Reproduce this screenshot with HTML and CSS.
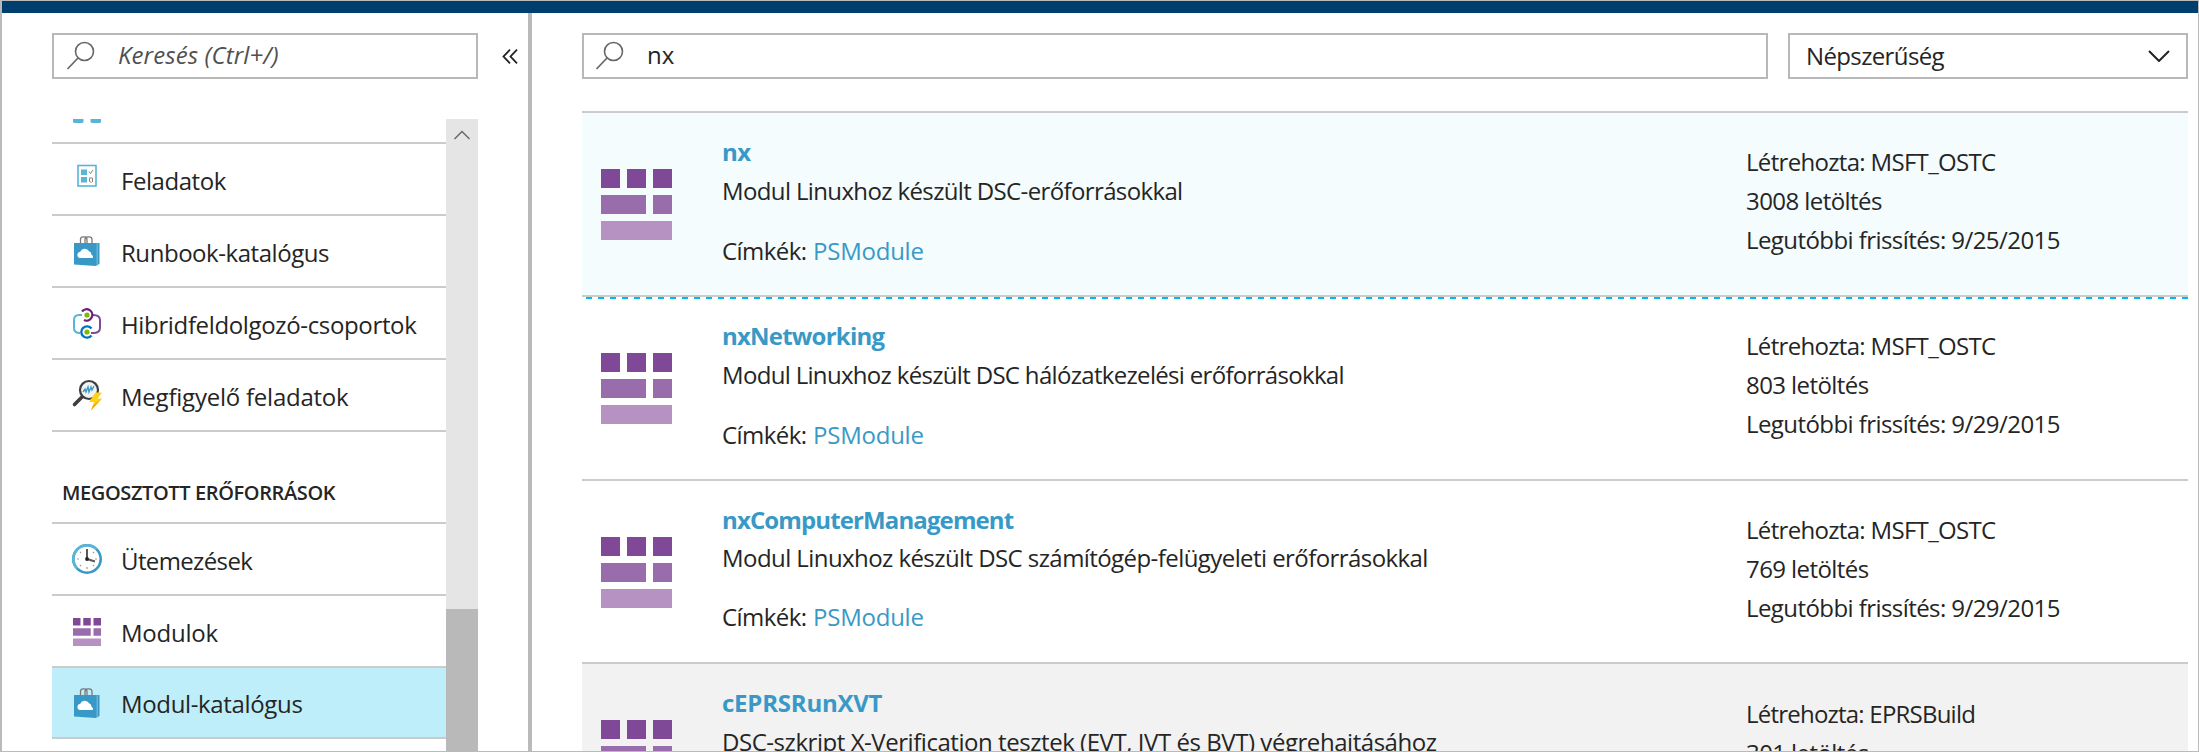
FILE: index.html
```
<!DOCTYPE html>
<html lang="hu">
<head>
<meta charset="utf-8">
<title>Modul-katalógus</title>
<link rel="stylesheet" href="styles.css">
</head>
<body>
<svg class="defs" aria-hidden="true">
  <symbol id="search" viewBox="0 0 30 30"><circle cx="18.5" cy="10.5" r="9" fill="none" stroke="#666" stroke-width="1.6"/><path d="M12 17L1.500 28" fill="none" stroke="#666" stroke-width="1.700"/></symbol>
  <symbol id="module" viewBox="0 0 71 71"><path fill="#804998" d="M0 0h19v19H0zM26 0h19v19H26zM52 0h19v19H52z"/><path fill="#996cac" d="M0 26h45v19H0zM52 26h19v19H52z"/><path fill="#b592c1" d="M0 52h71v19H0z"/></symbol>
  <symbol id="bag" viewBox="0 0 32 32"><path d="M9.500 9V4.500Q9.500 1.800 12 1.800H13Q16 1.800 16 4.500V9M14 9V4.500Q14 1.800 17 1.800H18Q21 1.800 21 4.500V9" fill="none" stroke="#7a7a7a" stroke-width="1.300"/><path fill="#3999c6" d="M3 8h25.500v21l-4 2L3 29.500z"/><path fill="#68b4d8" d="M25.500 8.500L27 8v22l-1.500.8z"/><path fill="#fff" d="M8.500 23a3.200 3.200 0 0 1 .8-6.200 4.800 4.800 0 0 1 8.700-.5 3.600 3.600 0 0 1 2.500 3.500q1.800.5 1.500 2.500l-.5.700z"/></symbol>
</svg>
<div class="window">
  <div class="topbar"></div>
  <div class="body">
    <aside class="sidebar">
      <div class="side-head">
        <div class="field side-search"><svg class="search-icon"><use href="#search"/></svg><span class="placeholder">Keresés (Ctrl+/)</span></div>
        <svg class="collapse" viewBox="0 0 16 15"><path d="M8 .7L1.500 7.500L8 14.300M15 .7L8.500 7.500L15 14.300" fill="none" stroke="#222" stroke-width="1.800"/></svg>
      </div>
      <div class="side-scroll">
        <nav class="menu">
          <div class="row partial"><svg class="dashes" viewBox="0 0 28 4"><path fill="#59b4d9" d="M0 0h10.500v3l-1 1H1L0 3zM17.500 0H28v3l-1 1h-8.500l-1-1z"/></svg></div>
          <div class="row"><svg class="icon" viewBox="0 0 32 32"><rect x="7" y="2.500" width="18" height="20.500" fill="#fff" stroke="#59b4d9" stroke-width="1.600"/><path fill="#59b4d9" d="M10 6.500h6V12h-6zM10 14h6v5.500h-6z"/><path d="M18 8.500l1.500 2L22 7M18 15h3.500v4M18.500 15.500v3l2 1" fill="none" stroke="#777" stroke-width=".9"/></svg><span class="fit-4">Feladatok</span></div>
          <div class="row"><svg class="icon"><use href="#bag"/></svg><span class="fit-4">Runbook-katalógus</span></div>
          <div class="row"><svg class="icon" viewBox="0 0 32 32" fill="none" stroke-width="2"><path stroke="#59b4d9" d="M11 8H8q-5 0-5 5v8q0 5 6 5"/><path stroke="#804998" d="M22 8q7 0 7 5v8q0 5-7 5h-2"/><path stroke="#68217a" stroke-width="2.300" d="M11 4.500a5.700 5.700 0 1 1 2 8.500"/><path stroke="#0072c6" stroke-width="2.300" d="M20.500 21.500a5.700 5.700 0 1 0 0 7"/><circle cx="16" cy="8" r="2.600" fill="#7fba00"/><circle cx="16" cy="25" r="2.600" fill="#7fba00"/></svg><span class="fit-3">Hibridfeldolgozó-csoportok</span></div>
          <div class="row"><svg class="icon" viewBox="0 0 32 32"><path d="M12 17L3.500 25.500" stroke="#3e3e3e" stroke-width="3.600" stroke-linecap="round"/><circle cx="18" cy="11" r="9" fill="#f2f2f2" stroke="#3e3e3e" stroke-width="2.200"/><path d="M12 13l2-3 1 3 2-5 1 5 2-5 1 3 2-4" fill="none" stroke="#3999c6" stroke-width="1.400"/><path fill="#fcd116" d="M24.500 13.500H31l-4.500 6H31L20 31.500l3-8.500h-5z"/><path fill="#f8a21a" d="M31 19.500L20 31.500l2-5z"/></svg><span class="fit-2">Megfigyelő feladatok</span></div>
          <h2 class="group">MEGOSZTOTT ERŐFORRÁSOK</h2>
          <div class="row"><svg class="icon" viewBox="0 0 32 32"><circle cx="16" cy="16" r="13.700" fill="#fff" stroke="#3999c6" stroke-width="2.600"/><path d="M6.300 25.700A13.700 13.700 0 0 1 25.700 6.300" fill="none" stroke="#59b4d9" stroke-width="2.600"/><path d="M16 6v2M16 24v2M6 16h2M24 16h2M9 9l1 1M23 9l-1 1M9 23l1-1M23 23l-1-1" stroke="#999" stroke-width="1.200"/><path d="M16 6v10l8 2.500" fill="none" stroke="#5a5a5a" stroke-width="2"/><circle cx="16" cy="16" r="1.900" fill="#222"/></svg><span class="fit-5">Ütemezések</span></div>
          <div class="row"><svg class="icon module-small"><use href="#module"/></svg><span class="fit-2">Modulok</span></div>
          <div class="row selected"><svg class="icon"><use href="#bag"/></svg><span class="fit-3">Modul-katalógus</span></div>
        </nav>
        <div class="scrollbar"><div class="track"><svg class="up" viewBox="0 0 16 10"><path d="M.5 9L8 1.500L15.500 9" fill="none" stroke="#666" stroke-width="1.400"/></svg></div><div class="thumb"></div></div>
      </div>
    </aside>
    <main class="main">
      <div class="toolbar">
        <div class="field main-search"><svg class="search-icon"><use href="#search"/></svg><span>nx</span></div>
        <div class="field select"><span class="fit-6">Népszerűség</span><svg class="down" viewBox="0 0 22 12"><path d="M1 1L11 11L21 1" fill="none" stroke="#222" stroke-width="2"/></svg></div>
      </div>
      <div class="list">
        <article class="item hover">
          <svg class="item-icon"><use href="#module"/></svg>
          <div class="info"><h3 class="fit-6">nx</h3><p class="fit-6">Modul Linuxhoz készült DSC-erőforrásokkal</p><p class="tags">Címkék: <a>PSModule</a></p></div>
          <div class="meta"><p class="fit-7">Létrehozta: MSFT_OSTC</p><p>3008 letöltés</p><p>Legutóbbi frissítés: 9/25/2015</p></div>
        </article>
        <article class="item">
          <svg class="item-icon"><use href="#module"/></svg>
          <div class="info"><h3 class="fit-8">nxNetworking</h3><p class="fit-7">Modul Linuxhoz készült DSC hálózatkezelési erőforrásokkal</p><p class="tags">Címkék: <a>PSModule</a></p></div>
          <div class="meta"><p class="fit-7">Létrehozta: MSFT_OSTC</p><p>803 letöltés</p><p>Legutóbbi frissítés: 9/29/2015</p></div>
        </article>
        <article class="item short">
          <svg class="item-icon"><use href="#module"/></svg>
          <div class="info"><h3 class="fit-9">nxComputerManagement</h3><p>Modul Linuxhoz készült DSC számítógép-felügyeleti erőforrásokkal</p><p class="tags">Címkék: <a>PSModule</a></p></div>
          <div class="meta"><p class="fit-7">Létrehozta: MSFT_OSTC</p><p>769 letöltés</p><p>Legutóbbi frissítés: 9/29/2015</p></div>
        </article>
        <article class="item muted">
          <svg class="item-icon"><use href="#module"/></svg>
          <div class="info"><h3 class="fit-2">cEPRSRunXVT</h3><p class="fit-4">DSC-szkript X-Verification tesztek (EVT, IVT és BVT) végrehajtásához</p></div>
          <div class="meta"><p class="fit-8">Létrehozta: EPRSBuild</p><p>301 letöltés</p></div>
        </article>
      </div>
    </main>
  </div>
</div>
</body>
</html>
```
FILE: styles.css
```
* { box-sizing: border-box; }
body { margin: 0; overflow: hidden; background: #fff; color: #252525; font: 24px/39px "Open Sans", "Noto Sans", sans-serif; }
h2, h3, p { margin: 0; }
svg { display: block; flex: none; }
.defs { display: none; }

.window { display: flex; flex-direction: column; width: 2199px; height: 752px; border: 1px solid #bababa; border-left-width: 2px; overflow: hidden; }
.topbar { flex: none; height: 12px; background: #003e6e; }
.body { display: flex; flex: 1; min-height: 0; }

.sidebar { display: flex; flex-direction: column; flex: none; width: 530px; padding: 20px 0 0 50px; border-right: 4px solid #bababa; }
.side-head { display: flex; align-items: center; gap: 24px; }
.field { display: flex; align-items: center; height: 46px; border: 2px solid #b8b8b8; background: #fff; white-space: nowrap; }
.field span { padding-bottom: 3px; }
.side-search { width: 426px; padding-left: 12px; gap: 22px; }
.search-icon { width: 30px; height: 30px; }
.placeholder { font-style: italic; color: #505050; letter-spacing: .1px; }
.collapse { width: 16px; height: 15px; }

.side-scroll { display: flex; flex: 1; min-height: 0; width: 426px; margin-top: 40px; }
.menu { flex: 1; min-width: 0; overflow: hidden; }
.row { display: flex; align-items: center; gap: 18px; height: 72px; padding-left: 19px; border-bottom: 2px solid #cbcbcb; white-space: nowrap; }
.row span { padding-top: 3px; }
.row.partial { align-items: flex-start; height: 25px; padding-left: 21px; }
.row.selected { height: 71px; background: #beeefa; }
.row.selected span { padding-top: 2px; }
.icon { width: 32px; height: 32px; }
.icon.module-small { padding: 2px; margin-top: 1px; }
.dashes { width: 28px; height: 4px; }
.group { height: 92px; padding: 41px 0 0 10px; border-bottom: 2px solid #cbcbcb; font-size: 20px; font-weight: 600; letter-spacing: -.38px; white-space: nowrap; }

.scrollbar { display: flex; flex-direction: column; width: 32px; }
.track { height: 490px; padding: 11px 8px; background: #e5e5e5; }
.up { width: 16px; height: 10px; }
.thumb { flex: 1; background: #b9b9b9; }

.main { flex: 1; min-width: 0; padding: 20px 10px 0 50px; }
.toolbar { display: flex; gap: 20px; }
.main-search { flex: 1; padding-left: 11px; gap: 22px; }
.select { width: 400px; padding: 0 16px; justify-content: space-between; }
.select .fit-6 { padding-bottom: 1px; }
.down { width: 22px; height: 12px; }

.list { margin-top: 32px; border-top: 2px solid #cbcbcb; }
.item { display: grid; grid-template-columns: 121px 1024px 1fr; align-items: start; height: 184px; padding-left: 19px; border-bottom: 2px solid #cbcbcb; white-space: nowrap; letter-spacing: -.57px; }
.item.hover { background: #f4fcfe; position: relative; }
.item.hover::after { content: ""; position: absolute; left: 4px; right: 0; bottom: -4px; height: 2px; background: repeating-linear-gradient(90deg, #00b9f1 0 6px, transparent 6px 12px); }
.item.short { height: 183px; }
.item.short .info p { line-height: 38px; }
.item.muted { background: #f2f2f2; }
.item-icon { width: 71px; height: 71px; margin-top: 56px; }
.info { padding-top: 19px; }
.info h3 { font-size: 24px; font-weight: 700; line-height: 39px; color: #3999c6; }
.tags { margin-top: 21px; }
.tags a { margin-left: 1px; color: #3999c6; letter-spacing: -.25px; }
.meta { padding-top: 29px; }
.item.muted .meta { padding-top: 30px; }

.fit-2 { letter-spacing: -.23px; }
.fit-3 { letter-spacing: -.35px; }
.fit-4 { letter-spacing: -.45px; }
.fit-5 { letter-spacing: -.62px; }
.fit-6 { letter-spacing: -.63px; }
.fit-7 { letter-spacing: -.68px; }
.fit-8 { letter-spacing: -.78px; }
.fit-9 { letter-spacing: -.88px; }
```
